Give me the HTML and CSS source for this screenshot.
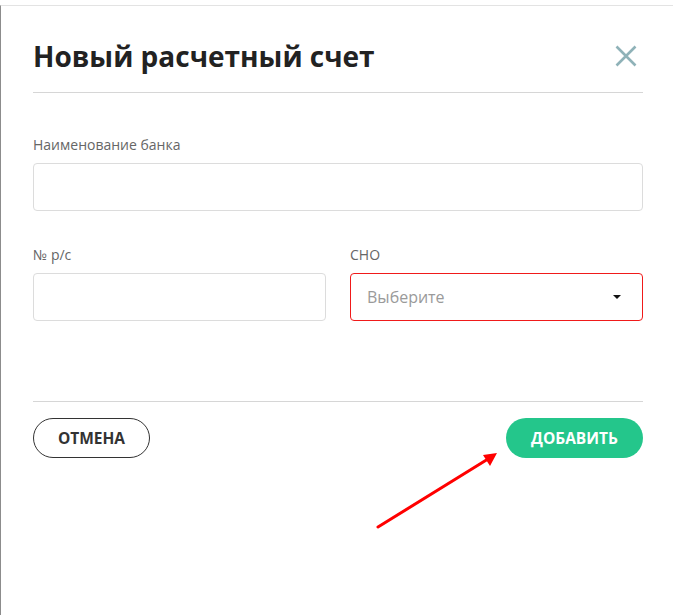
FILE: index.html
```html
<!DOCTYPE html>
<html lang="ru">
<head>
  <meta charset="UTF-8">
  <meta name="viewport" content="width=device-width, initial-scale=1.0">
  <title>Новый расчетный счет</title>
  <link rel="stylesheet" href="styles.css">
</head>
<body>
  <div class="modal">
    <div class="modal-header">
      <h1>Новый расчетный счет</h1>
      <button class="close-btn" aria-label="Закрыть">
        <svg width="22" height="22" viewBox="0 0 22 22">
          <path d="M1.5 1.5 L20.5 20.5 M20.5 1.5 L1.5 20.5" stroke="#8fb2b8" stroke-width="2.6" fill="none"/>
        </svg>
      </button>
    </div>
    <form class="modal-body" autocomplete="off">
      <div class="field">
        <label class="field-label">Наименование банка</label>
        <input class="field-input" type="text">
      </div>
      <div class="field-row">
        <div class="field">
          <label class="field-label">№ р/с</label>
          <input class="field-input" type="text">
        </div>
        <div class="field">
          <label class="field-label">СНО</label>
          <div class="field-select">
            <span class="placeholder">Выберите</span>
            <span class="caret"></span>
          </div>
        </div>
      </div>
    </form>
    <div class="modal-footer">
      <button class="btn btn-cancel">Отмена</button>
      <button class="btn btn-add">Добавить</button>
    </div>
  </div>
  <svg class="pointer-arrow" width="673" height="616" viewBox="0 0 673 616">
    <line x1="378" y1="527" x2="488" y2="459" stroke="#ff0000" stroke-width="3" stroke-linecap="round"/>
    <polygon points="497,453 483,455 490,466" fill="#ff0000"/>
  </svg>
</body>
</html>
```

FILE: styles.css
```css
body, html {
  padding: 0;
  margin: 0;
}
body {
  background-color: #fff;
  font-family: 'Open Sans', 'Liberation Sans', sans-serif;
  color: #222;
}
.modal {
  margin-top: 5px;
  min-height: 610px;
  box-sizing: border-box;
  border-top: 1px solid #e3e3e3;
  border-left: 1px solid #8c8c8c;
  padding: 0 30px 0 32px;
}
.modal-header {
  display: flex;
  justify-content: space-between;
  align-items: flex-start;
  padding-top: 33px;
  padding-bottom: 19px;
  border-bottom: 1px solid #d6d6d6;
}
.modal-header h1 {
  margin: 0;
  font-size: 28px;
  line-height: 34px;
  font-weight: 700;
  color: #222;
}
.close-btn {
  border: none;
  background: none;
  padding: 0;
  margin: 6px 6px 0 0;
  width: 22px;
  height: 22px;
  cursor: pointer;
}
.close-btn svg {
  display: block;
}
.modal-body {
  padding-top: 42px;
  padding-bottom: 80px;
  display: flex;
  flex-direction: column;
  gap: 34px;
}
.field {
  display: flex;
  flex-direction: column;
  gap: 8px;
}
.field-row {
  display: grid;
  grid-template-columns: 1fr 1fr;
  gap: 24px;
}
.field-label {
  font-size: 14px;
  line-height: 20px;
  color: #666;
}
.field-input {
  box-sizing: border-box;
  height: 48px;
  border: 1px solid #dcdcdc;
  border-radius: 4px;
  padding: 0 16px;
  font-size: 16px;
  font-family: inherit;
  outline: none;
}
.field-select {
  box-sizing: border-box;
  height: 48px;
  border: 1px solid #f01a1a;
  border-radius: 4px;
  padding: 0 21px 0 16px;
  display: flex;
  align-items: center;
  justify-content: space-between;
}
.placeholder {
  font-size: 16px;
  color: #9a9a9a;
}
.caret {
  width: 0;
  height: 0;
  border-left: 4px solid transparent;
  border-right: 4px solid transparent;
  border-top: 4px solid #111;
}
.modal-footer {
  border-top: 1px solid #d6d6d6;
  padding-top: 16px;
  display: flex;
  justify-content: space-between;
}
.btn {
  height: 40px;
  border-radius: 20px;
  padding: 0;
  font-family: inherit;
  font-size: 15.5px;
  font-weight: 700;
  text-transform: uppercase;
  cursor: pointer;
}
.btn-cancel {
  background: #fff;
  border: 1px solid #333;
  color: #333;
  width: 117px;
}
.btn-add {
  background: #24c68b;
  border: none;
  color: #fff;
  width: 137px;
}
.pointer-arrow {
  position: absolute;
  top: 0;
  left: 0;
  pointer-events: none;
}
```
